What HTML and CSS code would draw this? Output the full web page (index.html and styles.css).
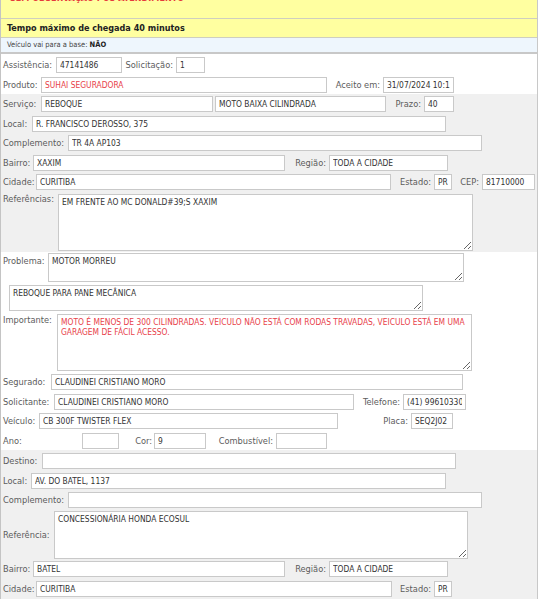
FILE: index.html
```html
<!DOCTYPE html>
<html lang="pt-BR">
<head>
<meta charset="utf-8">
<title>Atendimento</title>
<link rel="stylesheet" href="styles.css">
</head>
<body>
<div class="panel">
  <div class="notice"><p class="cut">SEM OBSERVAÇÃO PÓS ATENDIMENTO</p></div>
  <div class="notice"><p class="tempo">Tempo máximo de chegada 40 minutos</p></div>
  <div class="base">Veículo vai para a base: <b>NÃO</b></div>

  <div class="sec sec-a">
    <div class="row">
      <label class="lb w53">Assistência:</label>
      <input class="in w66" value="47141486" readonly>
      <label class="lb lr w54">Solicitação:</label>
      <input class="in w29" value="1" readonly>
    </div>
    <div class="row">
      <label class="lb w38">Produto:</label>
      <input class="in w286 red" value="SUHAI SEGURADORA" readonly>
      <label class="lb lr w56">Aceito em:</label>
      <input class="in w71" value="31/07/2024 10:15" readonly>
    </div>
  </div>

  <div class="sec gray">
    <div class="row">
      <label class="lb w38">Serviço:</label>
      <input class="in w172" value="REBOQUE" readonly>
      <input class="in w171 ml2" value="MOTO BAIXA CILINDRADA" readonly>
      <label class="lb lr w38">Prazo:</label>
      <input class="in w30" value="40" readonly>
    </div>
    <div class="row">
      <label class="lb w29">Local:</label>
      <input class="in w414" value="R. FRANCISCO DEROSSO, 375" readonly>
    </div>
    <div class="row">
      <label class="lb w65">Complemento:</label>
      <input class="in w414" value="TR 4A AP103" readonly>
    </div>
    <div class="row">
      <label class="lb w30">Bairro:</label>
      <input class="in w252" value="XAXIM" readonly>
      <label class="lb lr w44">Região:</label>
      <input class="in w119" value="TODA A CIDADE" readonly>
    </div>
    <div class="row">
      <label class="lb w33">Cidade:</label>
      <input class="in w355" value="CURITIBA" readonly>
      <label class="lb lr w43">Estado:</label>
      <input class="in w18" value="PR" readonly>
      <label class="lb lr w30">CEP:</label>
      <input class="in w53" value="81710000" readonly>
    </div>
    <div class="row row-top ref-row">
      <label class="lb w55 lh10">Referências:</label>
      <textarea class="ta w415 h57" readonly>EM FRENTE AO MC DONALD#39;S XAXIM</textarea>
    </div>
  </div>

  <div class="sec sec-b">
    <div class="row row-top prob-row">
      <label class="lb w45 lh16">Problema:</label>
      <textarea class="ta w416 h29" readonly>MOTOR MORREU</textarea>
    </div>
    <div class="row row-top gap3">
      <textarea class="ta w414 h26 ml6" readonly>REBOQUE PARA PANE MECÂNICA</textarea>
    </div>
    <div class="row row-top gap3">
      <label class="lb w54 lh12">Importante:</label>
      <textarea class="ta w415 h57 red" wrap="off" readonly>MOTO É MENOS DE 300 CILINDRADAS. VEICULO NÃO ESTÁ COM RODAS TRAVADAS, VEICULO ESTÁ EM UMA
GARAGEM DE FÁCIL ACESSO.</textarea>
    </div>
    <div class="row gap1">
      <label class="lb w48">Segurado:</label>
      <input class="in w412" value="CLAUDINEI CRISTIANO MORO" readonly>
    </div>
    <div class="row">
      <label class="lb w51">Solicitante:</label>
      <input class="in w300" value="CLAUDINEI CRISTIANO MORO" readonly>
      <label class="lb lr w49">Telefone:</label>
      <input class="in w63" value="(41) 996103303" readonly>
    </div>
    <div class="row">
      <label class="lb w36">Veículo:</label>
      <input class="in w299" value="CB 300F TWISTER FLEX" readonly>
      <label class="lb lr w73">Placa:</label>
      <input class="in w42" value="SEQ2J02" readonly>
    </div>
    <div class="row">
      <label class="lb w79">Ano:</label>
      <input class="in w37" value="" readonly>
      <label class="lb lr w35 pr2">Cor:</label>
      <input class="in w52" value="9" readonly>
      <label class="lb lr w70">Combustível:</label>
      <input class="in w51" value="" readonly>
    </div>
  </div>

  <div class="sec gray sec-c">
    <div class="row">
      <label class="lb w39">Destino:</label>
      <input class="in w414" value="" readonly>
    </div>
    <div class="row">
      <label class="lb w28">Local:</label>
      <input class="in w415" value="AV. DO BATEL, 1137" readonly>
    </div>
    <div class="row">
      <label class="lb w65">Complemento:</label>
      <input class="in w414" value="" readonly>
    </div>
    <div class="row row-tall">
      <label class="lb w51">Referência:</label>
      <textarea class="ta w414 h48" readonly>CONCESSIONÁRIA HONDA ECOSUL</textarea>
    </div>
    <div class="row">
      <label class="lb w30">Bairro:</label>
      <input class="in w252" value="BATEL" readonly>
      <label class="lb lr w44">Região:</label>
      <input class="in w119" value="TODA A CIDADE" readonly>
    </div>
    <div class="row">
      <label class="lb w33">Cidade:</label>
      <input class="in w356" value="CURITIBA" readonly>
      <label class="lb lr w42">Estado:</label>
      <input class="in w18" value="PR" readonly>
    </div>
  </div>
</div>
</body>
</html>
```

FILE: styles.css
```css
* { box-sizing: border-box; }

body {
  margin: 0;
  background: #fff;
  font-family: "DejaVu Sans Condensed", "DejaVu Sans", sans-serif;
  color: #333;
}

.panel {
  width: 538px;
  border-left: 1px solid #c4c4c4;
  border-right: 1px solid #c8c8c8;
  border-bottom: 1px solid #c8c8c8;
}

.notice {
  height: 19px;
  background: #ffffa0;
  border-bottom: 1px solid #cfcfbf;
  padding-left: 6px;
  overflow: hidden;
}

.cut {
  margin: -8px 0 0 3px;
  font-size: 9px;
  line-height: 12px;
  font-weight: bold;
  color: #e53b3b;
}

.tempo {
  margin: 0;
  font-size: 9px;
  line-height: 18px;
  font-weight: bold;
  color: #222;
}

.base {
  height: 16px;
  background: #eef6fd;
  border-bottom: 2px solid #c8c8c8;
  padding-left: 6px;
  font-size: 7.5px;
  line-height: 14px;
  color: #444;
}
.base b { color: #222; }

.sec { background: #fff; }
.gray { background: #f0f0f0; }
.sec-a { padding-top: 1.25px; }
.sec-b { padding-top: 1px; }
.sec-c { padding-top: 1px; padding-bottom: 1px; }

.row {
  display: flex;
  align-items: center;
  height: 19.5px;
  padding-left: 2px;
}
.row-top { align-items: flex-start; height: auto; }
.ref-row { padding: 1.75px 0 1.75px 2px; }
.row-tall { height: 49.5px; }
.gap3 { margin-top: 3px; }
.gap1 { margin-top: 1px; }

.lb {
  flex: none;
  font-size: 9.2px;
  line-height: 12px;
  color: #5c5c5c;
  white-space: nowrap;
  padding-right: 3px;
}
.lr { text-align: right; }
.pr2 { padding-right: 2px; }
.lh10 { line-height: 10px; }
.lh12 { line-height: 12px; }
.lh16 { line-height: 16px; }

.in {
  flex: none;
  height: 16px;
  margin: 0;
  border: 1px solid #c9c9c9;
  border-radius: 0;
  padding: 0 3px;
  background: #fff;
  font-family: "DejaVu Sans Condensed", "DejaVu Sans", sans-serif;
  font-size: 8.4px;
  color: #333;
  outline: none;
}

.ta {
  flex: none;
  display: block;
  margin: 0;
  border: 1px solid #c9c9c9;
  border-radius: 0;
  padding: 2px 3px;
  background: #fff;
  font-family: "DejaVu Sans Condensed", "DejaVu Sans", sans-serif;
  font-size: 8.4px;
  line-height: 10px;
  color: #333;
  overflow: hidden;
  resize: both;
  outline: none;
}

.red { color: #e8424a; }

.ml2 { margin-left: 2px; }
.ml6 { margin-left: 6px; }

.h26 { height: 26px; }
.h29 { height: 29px; }
.h48 { height: 48px; }
.h57 { height: 57px; }

.w18 { width: 18px; }
.w28 { width: 28px; }
.w29 { width: 29px; }
.w30 { width: 30px; }
.w33 { width: 33px; }
.w35 { width: 35px; }
.w36 { width: 36px; }
.w37 { width: 37px; }
.w38 { width: 38px; }
.w39 { width: 39px; }
.w42 { width: 42px; }
.w43 { width: 43px; }
.w44 { width: 44px; }
.w45 { width: 45px; }
.w48 { width: 48px; }
.w49 { width: 49px; }
.w51 { width: 51px; }
.w52 { width: 52px; }
.w53 { width: 53px; }
.w54 { width: 54px; }
.w55 { width: 55px; }
.w56 { width: 56px; }
.w63 { width: 63px; }
.w65 { width: 65px; }
.w66 { width: 66px; }
.w70 { width: 70px; }
.w71 { width: 71px; }
.w73 { width: 73px; }
.w79 { width: 79px; }
.w119 { width: 119px; }
.w171 { width: 171px; }
.w172 { width: 172px; }
.w252 { width: 252px; }
.w286 { width: 286px; }
.w299 { width: 299px; }
.w300 { width: 300px; }
.w355 { width: 355px; }
.w356 { width: 356px; }
.w412 { width: 412px; }
.w414 { width: 414px; }
.w415 { width: 415px; }
.w416 { width: 416px; }
```
